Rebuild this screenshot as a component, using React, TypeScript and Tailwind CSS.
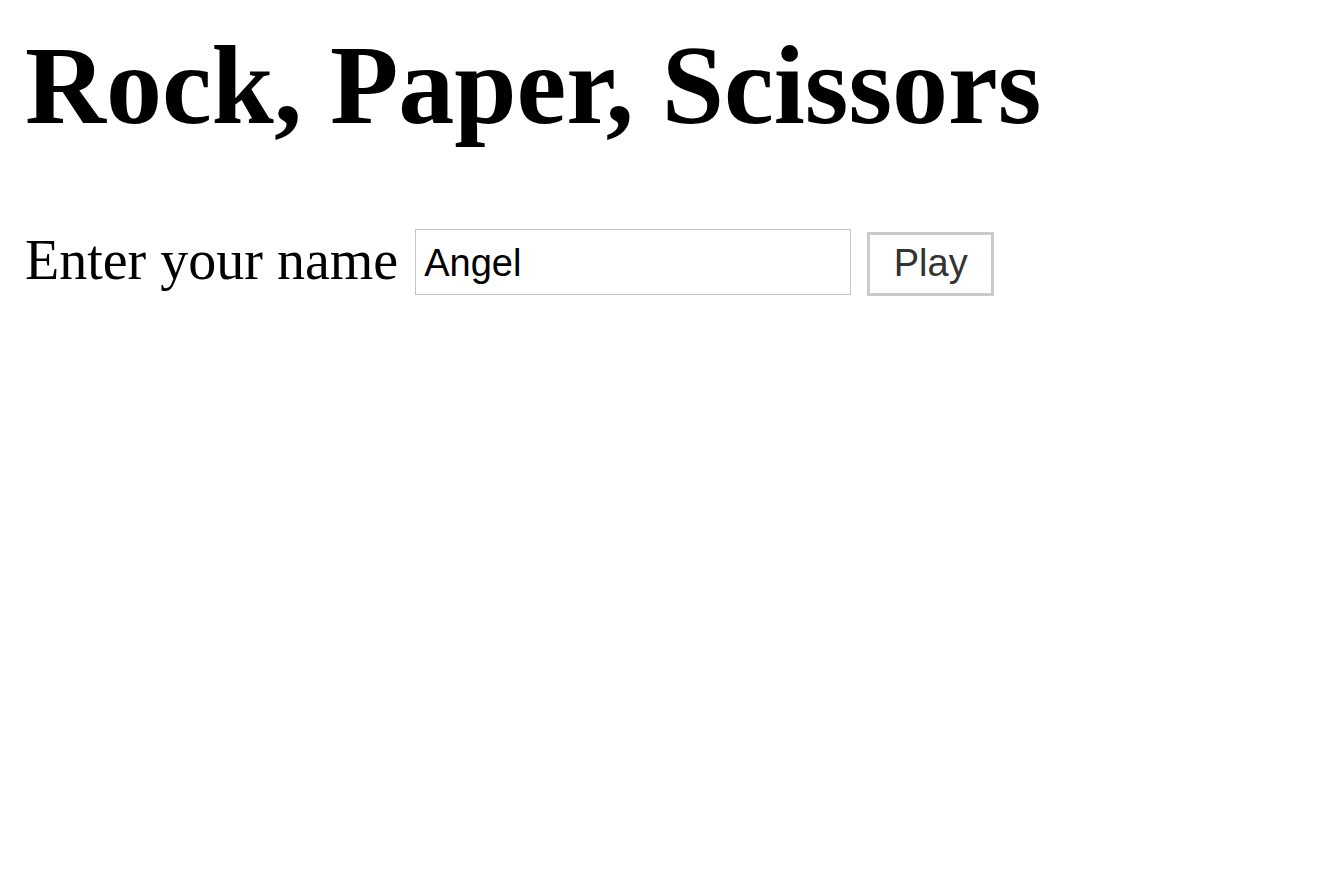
import React, { useState } from 'react';

export default function App() {
  const [name, setName] = useState('Angel');

  return (
    <div className="min-h-screen bg-white px-[25px] text-black">
      <h1 className="pt-[24px] font-['Liberation_Serif',serif] text-[112px] font-bold leading-[1.107]">
        Rock, Paper, Scissors
      </h1>
      <form
        className="mt-[81px] flex items-start gap-[17px]"
        onSubmit={(e) => e.preventDefault()}
      >
        <label className="mt-[3px] font-['Liberation_Serif',serif] text-[56px] leading-none">
          Enter your name
        </label>
        <input
          value={name}
          onChange={(e) => setName(e.target.value)}
          className="h-[66px] w-[436px] border border-[#c4c4c4] px-2 pt-1 font-['Liberation_Sans',sans-serif] text-[38px] text-black outline-none"
        />
        <button
          type="submit"
          className="ml-[-1px] mt-[3px] h-[64px] w-[127px] border-[3px] border-[#cbcbcb] bg-white font-['Liberation_Sans',sans-serif] text-[38px] text-[#333]"
        >
          Play
        </button>
      </form>
    </div>
  );
}
